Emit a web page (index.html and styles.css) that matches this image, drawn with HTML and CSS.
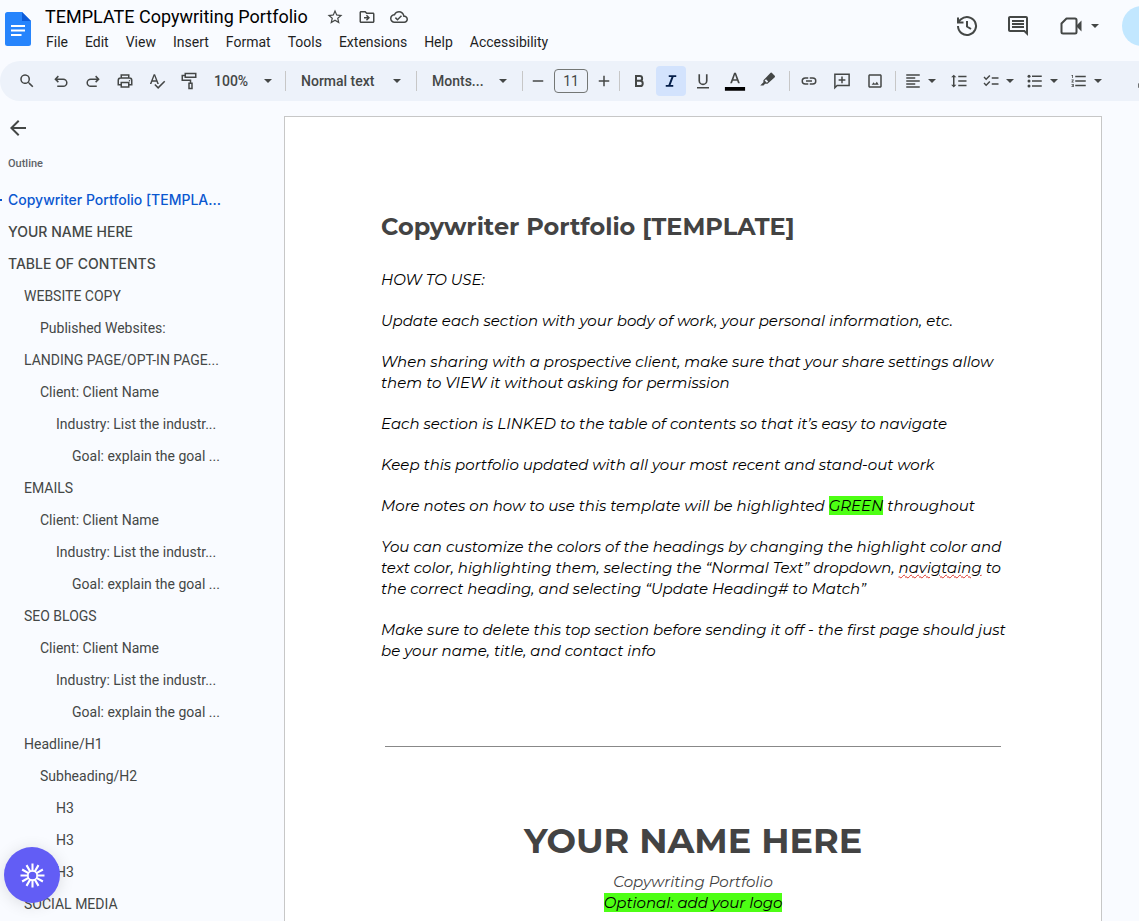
FILE: index.html
```html
<!DOCTYPE html>
<html lang="en">
<head>
<meta charset="utf-8">
<title>TEMPLATE Copywriting Portfolio</title>
<link rel="stylesheet" href="styles.css">
</head>
<body>
<div class="app">
  <header class="header">
    <svg class="logo" viewBox="0 0 26 34" aria-hidden="true"><path fill="#2684fc" d="M2.500 0H17l9 9v22.500a2.500 2.500 0 0 1-2.500 2.500h-21A2.500 2.500 0 0 1 0 31.500v-29A2.500 2.500 0 0 1 2.500 0z"/><path fill="#0d5bd8" d="M17 0l9 9h-9z"/><path stroke="#fff" stroke-width="1.800" d="M6 14h14M6 18.500h14M6 23h10.500"/></svg>
    <div class="heading">
      <div class="title-row">
        <h1 class="title">TEMPLATE Copywriting Portfolio</h1>
        <button class="title-button" aria-label="Star"><svg class="icon" viewBox="0 0 24 24"><path d="M22 9.240l-7.190-.620L12 2 9.190 8.630 2 9.240l5.460 4.730L5.820 21 12 17.270 18.180 21l-1.630-7.030L22 9.240zM12 15.400l-3.760 2.270 1-4.280-3.320-2.880 4.380-.380L12 6.100l1.710 4.040 4.380.380-3.320 2.880 1 4.280L12 15.400z"/></svg></button>
        <button class="title-button" aria-label="Move"><svg class="icon" viewBox="0 0 24 24"><path d="M20 6h-8l-2-2H4c-1.100 0-2 .900-2 2v12c0 1.100.900 2 2 2h16c1.100 0 2-.900 2-2V8c0-1.100-.900-2-2-2zm0 12H4V6h5.170l2 2H20v10zm-7.840-6H8v2h4.160l-1.590 1.590L11.990 17 16 13.010 11.990 9l-1.410 1.410L12.160 12z"/></svg></button>
        <button class="title-button" aria-label="Document status"><svg class="icon" viewBox="0 0 24 24"><path d="M19.350 10.040C18.670 6.590 15.640 4 12 4 9.110 4 6.600 5.640 5.350 8.040 2.340 8.360 0 10.910 0 14c0 3.310 2.690 6 6 6h13c2.760 0 5-2.240 5-5 0-2.640-2.050-4.780-4.650-4.960zM19 18H6c-2.210 0-4-1.790-4-4 0-2.050 1.530-3.760 3.560-3.970l1.070-.110.500-.950C8.080 7.140 9.940 6 12 6c2.620 0 4.880 1.860 5.390 4.430l.300 1.500 1.530.110c1.560.100 2.780 1.410 2.780 2.960 0 1.650-1.350 3-3 3zm-9-3.820l-2.090-2.090L6.500 13.500 10 17l6.010-6.010-1.410-1.410z"/></svg></button>
      </div>
      <nav class="menu" aria-label="Menu bar">
        <button>File</button><button>Edit</button><button>View</button><button>Insert</button><button>Format</button><button>Tools</button><button>Extensions</button><button>Help</button><button>Accessibility</button>
      </nav>
    </div>
    <div class="actions">
      <button class="action" aria-label="Version history"><svg class="icon large" viewBox="0 0 24 24"><path fill="none" stroke="currentColor" stroke-width="2" d="M3 12a9 9 0 1 0 3-6.700L3.500 7.500M3 3.500V8.500h5.500M12 7v5.500l4 2.500"/></svg></button>
      <button class="action" aria-label="Comments"><svg class="icon large" viewBox="0 0 24 24"><path d="M21.990 4c0-1.100-.890-2-1.990-2H4c-1.100 0-2 .900-2 2v12c0 1.100.900 2 2 2h14l4 4-.010-18zM20 4v13.170L18.830 16H4V4h16zM6 12h12v2H6zm0-3h12v2H6zm0-3h12v2H6z"/></svg></button>
      <button class="action meet" aria-label="Video call"><svg class="icon large" viewBox="0 0 24 24"><path fill="none" stroke="currentColor" stroke-width="2" stroke-linejoin="round" d="M7.500 4.500H16A1.500 1.500 0 0 1 17.500 6v12a1.500 1.500 0 0 1-1.500 1.500H4A1.500 1.500 0 0 1 2.500 18V9.500z"/><path d="M17.500 11.500L22.500 6.500v11l-5-5z"/></svg><i class="caret"></i></button>
    </div>
    <div class="avatar"></div>
  </header>

  <div class="toolbar" role="toolbar" aria-label="Formatting">
    <div class="tools">
      <button class="tool wide search" aria-label="Search"><svg class="icon" viewBox="0 0 24 24"><path d="M15.500 14h-.790l-.280-.270A6.500 6.500 0 1 0 13.730 14.430l.270.280v.790l5 4.990L20.490 19l-4.990-5zm-6 0a4.500 4.500 0 1 1 0-9 4.500 4.500 0 0 1 0 9z"/></svg></button>
      <button class="tool wide" aria-label="Undo"><svg class="icon" viewBox="0 0 24 24"><path fill="none" stroke="currentColor" stroke-width="2" d="M8.500 5.500L4.500 9.500l4 4M5 9.500h10a4.750 4.750 0 0 1 0 9.500H7"/></svg></button>
      <button class="tool wide" aria-label="Redo"><svg class="icon" viewBox="0 0 24 24"><path fill="none" stroke="currentColor" stroke-width="2" d="M15.500 5.500l4 4-4 4M19 9.500H9A4.750 4.750 0 0 0 9 19h8"/></svg></button>
      <button class="tool wide" aria-label="Print"><svg class="icon" viewBox="0 0 24 24"><path fill="none" stroke="currentColor" stroke-width="2" d="M7 8V4h10v4M7 17H3v-6a3 3 0 0 1 3-3h12a3 3 0 0 1 3 3v6h-4M7 14h10v6H7z"/><circle cx="18" cy="11.500" r="1"/></svg></button>
      <button class="tool wide" aria-label="Spelling"><svg class="icon" viewBox="0 0 24 24"><path d="M12.450 16h2.090L9.430 3H7.570L2.460 16h2.090l1.120-3h5.640l1.140 3zm-6.020-5L8.500 5.480 10.570 11H6.430zm15.160.590l-8.090 8.090L9.830 16l-1.410 1.410 5.090 5.090L23 13l-1.410-1.410z"/></svg></button>
      <button class="tool wide" aria-label="Paint format"><svg class="icon" viewBox="0 0 24 24"><path fill="none" stroke="currentColor" stroke-width="2" d="M7 2h14v5H7zM7 4.500H3V11h11v4M12 15h4v7h-4z"/></svg></button>
    </div>
    <div class="picker zoom"><select aria-label="Zoom"><option>100%</option></select><i class="caret"></i></div>
    <i class="rule"></i>
    <div class="picker style"><select aria-label="Styles"><option>Normal text</option></select><i class="caret"></i></div>
    <i class="rule"></i>
    <div class="picker font"><select aria-label="Font"><option>Monts...</option></select><i class="caret"></i></div>
    <i class="rule"></i>
    <div class="size">
      <button class="tool" aria-label="Decrease font size"><svg class="icon" viewBox="0 0 24 24"><path d="M5 11h14v2H5z"/></svg></button>
      <input type="text" value="11" aria-label="Font size">
      <button class="tool" aria-label="Increase font size"><svg class="icon" viewBox="0 0 24 24"><path d="M5 11h6V5h2v6h6v2h-6v6h-2v-6H5z"/></svg></button>
    </div>
    <i class="rule"></i>
    <div class="tools spaced">
      <button class="tool" aria-label="Bold"><svg class="icon" viewBox="0 0 24 24"><path fill="none" stroke="currentColor" stroke-width="2.600" d="M8 5.300h5a3.200 3.200 0 0 1 0 6.400H8zM8 11.700h5.500a3.500 3.500 0 0 1 0 7H8z"/></svg></button>
      <button class="tool active" aria-label="Italic" aria-pressed="true"><svg class="icon" viewBox="0 0 24 24"><path fill="none" stroke="currentColor" stroke-width="2.600" d="M9 5.500h10M5 18.500h10M14.500 5.500l-5 13"/></svg></button>
      <button class="tool" aria-label="Underline"><svg class="icon" viewBox="0 0 24 24"><path fill="none" stroke="currentColor" stroke-width="2.200" d="M7 3v8.500a5 5 0 0 0 10 0V3"/><path d="M4 20h16v2H4z"/></svg></button>
      <button class="tool" aria-label="Text color"><svg class="icon swatch" viewBox="0 0 24 24"><path d="M11 3L6.700 14.500h2l1-2.700h4.600l1 2.700h2L13 3h-2zm-.700 7.200l1.700-5 1.700 5z"/><path fill="#000" d="M1 18.500h22v4H1z"/></svg></button>
      <button class="tool" aria-label="Highlight color"><svg class="icon" viewBox="0 0 24 24"><path d="M16.200 1.500a2 2 0 0 1 2.800 0l3 3a2 2 0 0 1 0 2.800l-9.300 8.500h-3.200L7.300 18H3l4.200-4.200V11zM10.700 9.700l-1.900 1.700 3 3 1.800-1.800z" fill-rule="evenodd"/></svg></button>
    </div>
    <i class="rule"></i>
    <div class="tools spaced insert">
      <button class="tool" aria-label="Insert link"><svg class="icon" viewBox="0 0 24 24"><path d="M3.900 12c0-1.710 1.390-3.100 3.100-3.100h4V7H7a5 5 0 0 0 0 10h4v-1.900H7A3.100 3.100 0 0 1 3.900 12zM8 13h8v-2H8v2zm9-6h-4v1.900h4a3.100 3.100 0 0 1 0 6.200h-4V17h4a5 5 0 0 0 0-10z"/></svg></button>
      <button class="tool" aria-label="Add comment"><svg class="icon" viewBox="0 0 24 24"><path fill="none" stroke="currentColor" stroke-width="2" d="M2.500 21V3h19v15H5.500zM12 6v9M7.500 10.500h9"/></svg></button>
      <button class="tool" aria-label="Insert image"><svg class="icon" viewBox="0 0 24 24"><path d="M19 5v14H5V5h14m0-2H5c-1.100 0-2 .900-2 2v14c0 1.100.900 2 2 2h14c1.100 0 2-.900 2-2V5c0-1.100-.900-2-2-2zm-4.500 10l-2.500 3-1.800-2.200L7.500 17h9.500z"/></svg></button>
    </div>
    <i class="rule"></i>
    <div class="tools spaced last">
      <button class="tool menu-tool" aria-label="Align"><svg class="icon" viewBox="0 0 24 24"><path d="M15 15H3v2h12v-2zm0-8H3v2h12V7zM3 13h18v-2H3v2zm0 8h18v-2H3v2zM3 3v2h18V3H3z"/></svg><i class="caret"></i></button>
      <button class="tool" aria-label="Line spacing"><svg class="icon" viewBox="0 0 24 24"><path d="M6 7h2.500L5 3.500 1.500 7H4v10H1.500L5 20.500 8.500 17H6V7zm5-2v2h11V5H11zm0 14h11v-2H11v2zm0-6h11v-2H11v2z"/></svg></button>
      <button class="tool menu-tool" aria-label="Checklist"><svg class="icon" viewBox="0 0 24 24"><path d="M22 7h-9v2h9V7zm0 8h-9v2h9v-2zM5.540 11L2 7.460l1.410-1.410 2.120 2.120 4.240-4.240 1.410 1.410L5.540 11zm0 8L2 15.460l1.410-1.410 2.120 2.120 4.240-4.240 1.410 1.410L5.540 19z"/></svg><i class="caret"></i></button>
      <button class="tool menu-tool" aria-label="Bulleted list"><svg class="icon" viewBox="0 0 24 24"><circle cx="4" cy="5.500" r="2"/><circle cx="4" cy="12" r="2"/><circle cx="4" cy="18.500" r="2"/><path d="M8 4.500h13v2H8zM8 11h13v2H8zM8 17.500h13v2H8z"/></svg><i class="caret"></i></button>
      <button class="tool menu-tool" aria-label="Numbered list"><svg class="icon" viewBox="0 0 24 24"><path d="M2 17h2v.500H3v1h1v.500H2v1h3v-4H2v1zm1-9h1V4H2v1h1v3zm-1 3h1.800L2 13.100v.900h3v-1H3.200L5 10.900V10H2v1zm5-6v2h14V5H7zm0 14h14v-2H7v2zm0-6h14v-2H7v2z"/></svg><i class="caret"></i></button>
      <button class="tool mode" aria-label="Editing mode"><svg class="icon" viewBox="0 0 24 24"><path fill="none" stroke="currentColor" stroke-width="2" d="M4 20v-4L15.500 4.500l4 4L8 20z"/></svg></button>
    </div>
  </div>

  <div class="workspace">
    <aside class="sidebar">
      <button class="back" aria-label="Close outline"><svg class="icon large" viewBox="0 0 24 24"><path d="M20 11H7.830l5.590-5.590L12 4l-8 8 8 8 1.410-1.410L7.830 13H20v-2z"/></svg></button>
      <h2 class="outline-title">Outline</h2>
      <nav class="outline" aria-label="Outline">
        <a href="#top" class="l1 current">Copywriter Portfolio [TEMPLA...</a>
        <a href="#name" class="l1">YOUR NAME HERE</a>
        <a href="#toc" class="l1">TABLE OF CONTENTS</a>
        <a href="#toc" class="l2">WEBSITE COPY</a>
        <a href="#toc" class="l3">Published Websites:</a>
        <a href="#toc" class="l2">LANDING PAGE/OPT-IN PAGE...</a>
        <a href="#toc" class="l3">Client: Client Name</a>
        <a href="#toc" class="l4">Industry: List the industr...</a>
        <a href="#toc" class="l5">Goal: explain the goal ...</a>
        <a href="#toc" class="l2">EMAILS</a>
        <a href="#toc" class="l3">Client: Client Name</a>
        <a href="#toc" class="l4">Industry: List the industr...</a>
        <a href="#toc" class="l5">Goal: explain the goal ...</a>
        <a href="#toc" class="l2">SEO BLOGS</a>
        <a href="#toc" class="l3">Client: Client Name</a>
        <a href="#toc" class="l4">Industry: List the industr...</a>
        <a href="#toc" class="l5">Goal: explain the goal ...</a>
        <a href="#toc" class="l2">Headline/H1</a>
        <a href="#toc" class="l3">Subheading/H2</a>
        <a href="#toc" class="l4">H3</a>
        <a href="#toc" class="l4">H3</a>
        <a href="#toc" class="l4">H3</a>
        <a href="#toc" class="l2">SOCIAL MEDIA</a>
      </nav>
    </aside>
    <main class="page">
      <h2 class="doc-title" id="top">Copywriter Portfolio [TEMPLATE]</h2>
      <div class="notes">
        <p>HOW TO USE:</p>
        <p>Update each section with your body of work, your personal information, etc.</p>
        <p>When sharing with a prospective client, make sure that your share settings allow<br>them to VIEW it without asking for permission</p>
        <p>Each section is LINKED to the table of contents so that it’s easy to navigate</p>
        <p>Keep this portfolio updated with all your most recent and stand-out work</p>
        <p>More notes on how to use this template will be highlighted <mark>GREEN</mark> throughout</p>
        <p>You can customize the colors of the headings by changing the highlight color and<br>text color, highlighting them, selecting the “Normal Text” dropdown, <span class="misspelled">navigtaing</span> to<br>the correct heading, and selecting “Update Heading# to Match”</p>
        <p>Make sure to delete this top section before sending it off - the first page should just<br>be your name, title, and contact info</p>
      </div>
      <hr class="divider">
      <h2 class="name" id="name">YOUR NAME HERE</h2>
      <p class="tagline">Copywriting Portfolio</p>
      <p class="tagline"><mark>Optional: add your logo</mark></p>
    </main>
  </div>

  <button class="assistant" aria-label="Assistant"><svg viewBox="-12 -12 24 24" class="burst"><g stroke="#fff" stroke-width="2"><path d="M0-4V-11.500M0 4V11.500M4 0H11.500M-4 0H-11.500"/><path d="M0-4V-11.500M0 4V11.500M4 0H11.500M-4 0H-11.500" transform="rotate(30)"/><path d="M0-4V-11.500M0 4V11.500M4 0H11.500M-4 0H-11.500" transform="rotate(60)"/></g><circle r="4.500" fill="none" stroke="#fff" stroke-width="1.600"/></svg></button>
</div>
</body>
</html>
```
FILE: styles.css
```css
* {
  box-sizing: border-box;
}

body {
  margin: 0;
  background: #f9fbff;
  color: #1f1f1f;
  font-family: Roboto, "Liberation Sans", sans-serif;
  font-size: 14px;
}

h1, h2, p {
  margin: 0;
}

button {
  padding: 0;
  border: 0;
  background: none;
  color: inherit;
  font: inherit;
}

.app {
  display: flex;
  flex-direction: column;
  height: 100vh;
  overflow: hidden;
}

.icon {
  flex: none;
  width: 18px;
  height: 18px;
  fill: currentColor;
}

.icon.large {
  width: 24px;
  height: 24px;
}

.caret {
  flex: none;
  border: 4px solid transparent;
  border-top-color: #444746;
  border-bottom: 0;
}

/* Header */
.header {
  display: flex;
  flex: none;
  height: 61px;
  overflow: hidden;
  color: #444746;
}

.logo {
  flex: none;
  width: 26px;
  height: 34px;
  margin: 12px 10px 0 5px;
}

.title-row {
  display: flex;
  align-items: center;
  height: 32px;
  padding: 2px 0 0 4px;
}

.title {
  margin-right: 11px;
  color: #000;
  font-size: 18px;
  font-weight: 400;
  line-height: 20px;
  white-space: nowrap;
}

.title-button {
  display: flex;
  justify-content: center;
  align-items: center;
  width: 32px;
  height: 28px;
}

.menu {
  display: flex;
  gap: 17px;
  height: 20px;
  padding-left: 5px;
  color: #1f1f1f;
  line-height: 20px;
}

.actions {
  display: flex;
  flex: none;
  align-items: center;
  gap: 11px;
  height: 52px;
  margin-left: auto;
}

.action {
  display: flex;
  justify-content: center;
  align-items: center;
  width: 40px;
  height: 40px;
}

.action.meet {
  gap: 8px;
  width: 60px;
}

.avatar {
  flex: none;
  width: 40px;
  height: 40px;
  margin: 6px -23px 0 13px;
  border-radius: 50%;
  background: #c2e7ff;
}

/* Toolbar */
.toolbar {
  display: flex;
  flex: none;
  align-items: center;
  height: 40px;
  padding-left: 11px;
  overflow: hidden;
  border-radius: 20px 0 0 20px;
  background: #edf2fa;
  color: #444746;
}

.tools {
  display: flex;
  flex: none;
}

.tools.spaced {
  gap: 2px;
  padding: 0 7px 0 4px;
}

.tools.insert {
  gap: 3px;
  padding-right: 5px;
}

.tools.last {
  gap: 4px;
}

.tool {
  display: flex;
  justify-content: center;
  align-items: center;
  width: 30px;
  height: 30px;
  border-radius: 4px;
}

.tool.wide {
  width: 32px;
}

.tool.search {
  margin-right: 2px;
}

.tool.active {
  background: #d3e3fd;
  color: #041e49;
}

.tool.menu-tool {
  gap: 6px;
  width: 40px;
}

.tool.mode {
  margin-left: 20px;
}

.icon.swatch {
  width: 24px;
  height: 22px;
}

.rule {
  flex: none;
  width: 1px;
  height: 20px;
  background: #c7c7c7;
}

.picker {
  display: flex;
  flex: none;
  align-items: center;
}

.picker select {
  flex: 1;
  min-width: 0;
  padding: 0;
  border: 0;
  appearance: none;
  background: none;
  color: #444746;
  font: 500 14px/20px Roboto, sans-serif;
}

.zoom {
  width: 80px;
  padding: 0 13px 0 9px;
}

.style {
  width: 130px;
  padding: 0 15px;
}

.font {
  width: 105px;
  padding: 0 15px;
}

.size {
  display: flex;
  flex: none;
  align-items: center;
}

.size input {
  width: 34px;
  height: 24px;
  margin: 0 1px;
  padding: 0;
  border: 1px solid #747775;
  border-radius: 4px;
  background: none;
  color: #444746;
  font: 400 14px/20px Roboto, sans-serif;
  text-align: center;
}

/* Workspace */
.workspace {
  display: flex;
  flex: 1;
  min-height: 0;
  overflow: hidden;
}

.sidebar {
  flex: none;
  width: 284px;
  padding-top: 15px;
  color: #444746;
}

.back {
  display: flex;
  margin-left: 6px;
}

.outline-title {
  margin: 16px 0 12px 8px;
  color: #5f6368;
  font-size: 11px;
  font-weight: 500;
  line-height: 16px;
}

.outline {
  display: flex;
  flex-direction: column;
  width: 240px;
}

.outline a {
  height: 32px;
  color: inherit;
  line-height: 32px;
  text-decoration: none;
  white-space: nowrap;
}

.outline .l1 {
  padding-left: 8px;
  font-family: Inter, Roboto, sans-serif;
  font-weight: 500;
}

.outline .l2 {
  padding-left: 24px;
}

.outline .l3 {
  padding-left: 40px;
}

.outline .l4 {
  padding-left: 56px;
}

.outline .l5 {
  padding-left: 72px;
}

.outline .current {
  display: flex;
  align-items: center;
  padding-left: 0;
  color: #0b57d0;
}

.outline .current::before {
  width: 2px;
  height: 2px;
  margin-right: 6px;
  background: #0b57d0;
  content: "";
}

.page {
  flex: 1;
  min-width: 0;
  margin: 15px 37px 0 0;
  padding: 93px 96px 0;
  border: 1px solid #c7c7c7;
  border-bottom: 0;
  background: #fff;
  color: #000;
  font-family: Montserrat, Inter, sans-serif;
  font-size: 15px;
  line-height: 21px;
}

.doc-title {
  color: #434343;
  font-size: 24px;
  line-height: 34px;
  white-space: nowrap;
}

.notes {
  display: flex;
  flex-direction: column;
  gap: 20px;
  margin-top: 25px;
  font-style: italic;
  white-space: nowrap;
}

mark {
  background: #4dff14;
  color: inherit;
}

.misspelled {
  text-decoration: underline wavy #d93025 1px;
}

.divider {
  height: 1px;
  margin: 85px 4px 0;
  border: 0;
  background: #888;
}

.name {
  margin: 72px 0 8px;
  color: #434343;
  font-size: 35px;
  line-height: 44px;
  text-align: center;
}

.tagline {
  color: #434343;
  font-style: italic;
  text-align: center;
}

.tagline mark {
  color: #000;
}

/* Floating assistant button */
.assistant {
  display: flex;
  position: fixed;
  bottom: 18px;
  left: 4px;
  justify-content: center;
  align-items: center;
  width: 56px;
  height: 56px;
  border-radius: 50%;
  background: #625df5;
  box-shadow: 0 2px 16px rgba(0, 0, 0, 0.12);
}

.burst {
  width: 25px;
  height: 25px;
}
```
